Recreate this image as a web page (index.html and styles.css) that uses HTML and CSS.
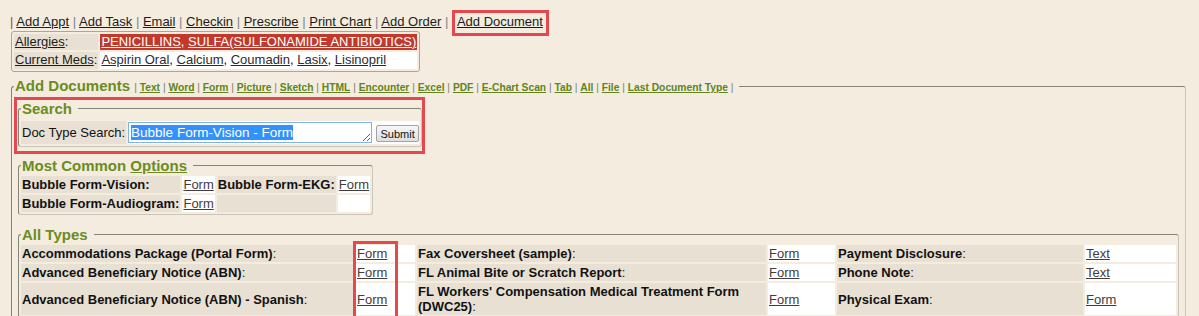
FILE: index.html
```html
<!DOCTYPE html>
<html lang="en">
<head>
  <meta charset="UTF-8">
  <title>Add Document</title>
  <link rel="stylesheet" href="styles.css">
</head>
<body>
  <div class="nav">
    <span class="sep first">|</span> <a href="#">Add Appt</a>
    <span class="sep">|</span> <a href="#">Add Task</a>
    <span class="sep">|</span> <a href="#">Email</a>
    <span class="sep">|</span> <a href="#">Checkin</a>
    <span class="sep">|</span> <a href="#">Prescribe</a>
    <span class="sep">|</span> <a href="#">Print Chart</a>
    <span class="sep">|</span> <a href="#">Add Order</a>
    <span class="sep">|</span> <span class="mark"><a href="#">Add Document</a></span>
  </div>

  <div class="alerts">
    <table>
      <tr>
        <td class="lbl"><a href="#">Allergies</a>:</td>
        <td class="allergy"><a href="#">PENICILLINS</a>, <a href="#">SULFA(SULFONAMIDE ANTIBIOTICS)</a></td>
      </tr>
      <tr>
        <td class="lbl"><a href="#">Current Meds</a>:</td>
        <td class="meds"><a href="#">Aspirin Oral</a>, <a href="#">Calcium</a>, <a href="#">Coumadin</a>, <a href="#">Lasix</a>, <a href="#">Lisinopril</a></td>
      </tr>
    </table>
  </div>

  <fieldset class="docs">
    <legend>Add Documents <span class="types">| <a href="#">Text</a> | <a href="#">Word</a> | <a href="#">Form</a> | <a href="#">Picture</a> | <a href="#">Sketch</a> | <a href="#">HTML</a> | <a href="#">Encounter</a> | <a href="#">Excel</a> | <a href="#">PDF</a> | <a href="#">E-Chart Scan</a> | <a href="#">Tab</a> | <a href="#">All</a> | <a href="#">File</a> | <a href="#">Last Document Type</a> |</span></legend>

    <div class="mark search-mark">
      <fieldset class="group search">
        <legend>Search</legend>
        <table class="grid">
          <tr>
            <td class="lbl">Doc Type Search:</td>
            <td class="val">
              <div class="search-row">
                <div class="doc-input"><span class="sel">Bubble Form-Vision - Form</span></div>
                <button class="submit">Submit</button>
              </div>
            </td>
          </tr>
        </table>
      </fieldset>
    </div>

    <fieldset class="group common">
      <legend>Most Common <a href="#">Options</a></legend>
      <table class="grid">
        <tr>
          <td class="lbl">Bubble Form-Vision:</td>
          <td class="val"><a href="#">Form</a></td>
          <td class="lbl">Bubble Form-EKG:</td>
          <td class="val"><a href="#">Form</a></td>
        </tr>
        <tr>
          <td class="lbl">Bubble Form-Audiogram:</td>
          <td class="val"><a href="#">Form</a></td>
          <td class="lbl"></td>
          <td class="val"></td>
        </tr>
      </table>
    </fieldset>

    <fieldset class="group all">
      <legend>All Types</legend>
      <table class="grid">
        <colgroup>
          <col class="c-lbl1"><col class="c-val1"><col class="c-lbl2"><col class="c-val2"><col class="c-lbl3"><col class="c-val3">
        </colgroup>
        <tr>
          <td class="lbl">Accommodations Package (Portal Form)<span class="colon">:</span></td>
          <td class="val marked"><a href="#">Form</a><span class="col-mark"></span></td>
          <td class="lbl">Fax Coversheet (sample)<span class="colon">:</span></td>
          <td class="val"><a href="#">Form</a></td>
          <td class="lbl">Payment Disclosure<span class="colon">:</span></td>
          <td class="val"><a href="#">Text</a></td>
        </tr>
        <tr>
          <td class="lbl">Advanced Beneficiary Notice (ABN)<span class="colon">:</span></td>
          <td class="val"><a href="#">Form</a></td>
          <td class="lbl">FL Animal Bite or Scratch Report<span class="colon">:</span></td>
          <td class="val"><a href="#">Form</a></td>
          <td class="lbl">Phone Note<span class="colon">:</span></td>
          <td class="val"><a href="#">Text</a></td>
        </tr>
        <tr>
          <td class="lbl">Advanced Beneficiary Notice (ABN) - Spanish<span class="colon">:</span></td>
          <td class="val"><a href="#">Form</a></td>
          <td class="lbl">FL Workers' Compensation Medical Treatment Form (DWC25)<span class="colon">:</span></td>
          <td class="val"><a href="#">Form</a></td>
          <td class="lbl">Physical Exam<span class="colon">:</span></td>
          <td class="val"><a href="#">Form</a></td>
        </tr>
      </table>
    </fieldset>
  </fieldset>
</body>
</html>
```

FILE: styles.css
```css
body {
  margin: 8px;
  background: #f4eddf;
  font-family: "Liberation Sans", Arial, sans-serif;
  font-size: 13px;
  color: #111;
}
a {
  color: #1c1c1c;
}
.nav {
  padding: 5px 0 0 2px;
  line-height: 17px;
  white-space: nowrap;
}
.sep {
  color: #7b8593;
}
.sep.first {
  color: #b03a2e;
}
.mark {
  border: 3px solid #e5484d;
}
.nav .mark {
  padding: 1px 3px 4px 2px;
}

.alerts {
  width: fit-content;
  margin: 1px 0 0 3px;
  border: 1px solid #aaa69c;
  border-radius: 3px;
}
.alerts table {
  border-spacing: 2px;
}
.alerts td {
  padding: 0 1px;
  line-height: 16px;
}
.alerts tr + tr td {
  padding-bottom: 1px;
}
.alerts .lbl {
  background: #e8e1d3;
}
.allergy {
  background: #c0392b;
  color: #fff;
}
.allergy a {
  color: #fff;
}
.meds {
  background: #fff;
}
.meds a {
  color: #2b2b33;
}

fieldset {
  margin: 0;
  padding: 0;
  min-width: 0;
  border: 1px solid;
  border-color: #85827a #c9c5bb #c9c5bb #85827a;
  border-radius: 3px;
}
legend {
  color: #6a8c22;
  font-weight: bold;
  font-size: 15px;
  line-height: 17px;
  padding: 0 6px 0 1px;
}
legend a {
  color: inherit;
}
.docs {
  margin: 5px 5px 0 3px;
  padding: 1px 0 0 2px;
}
.types {
  font-size: 10.25px;
  font-weight: normal;
  color: #7a7a7a;
}
.types a {
  color: #5f8420;
  font-weight: bold;
}

.search-mark {
  width: fit-content;
  padding: 0 0 4px 1px;
}
.group legend {
  margin-left: 2px;
}
.search {
  width: fit-content;
  padding-top: 2px;
}
.common {
  width: fit-content;
  margin: 3px 0 0 4px;
}
.all {
  margin: 11px 6px 0 4px;
}

.grid {
  border-spacing: 2px;
}
.grid td {
  padding: 1px;
  line-height: 15px;
}
.grid .lbl {
  background: #e8e1d3;
  font-weight: bold;
}
.grid .val {
  background: #fff;
}
.grid .val a {
  color: #443c3c;
}
.grid .colon {
  font-weight: normal;
}
.search .grid .lbl {
  font-weight: normal;
}
.search .grid .val {
  padding: 1px 0;
}
.search-row {
  display: flex;
  align-items: flex-end;
  gap: 4px;
}
.doc-input {
  box-sizing: border-box;
  width: 244px;
  height: 21px;
  padding: 0 2px;
  border: 1px solid #7eb4ea;
  background: #fff;
  font-size: 13.5px;
  line-height: 19px;
  resize: both;
  overflow: hidden;
  white-space: nowrap;
}
.sel {
  background: #3390ff;
  color: #fff;
}
.submit {
  box-sizing: border-box;
  width: 43px;
  height: 17px;
  margin-bottom: 1px;
  padding: 0;
  border: 1px solid #a3a3a3;
  border-radius: 2px;
  background: linear-gradient(#f7f7f7, #dedede);
  font-family: "Liberation Sans", Arial, sans-serif;
  font-size: 11px;
  color: #111;
}

.all .grid {
  width: 100%;
  table-layout: fixed;
}
.c-lbl1 { width: 333px; }
.c-val1 { width: 59px; }
.c-lbl2 { width: 349px; }
.c-val2 { width: 67px; }
.c-lbl3 { width: 246px; }
.c-val3 { width: 91px; }
.marked {
  position: relative;
}
.col-mark {
  position: absolute;
  left: -3px;
  top: -4px;
  width: 45px;
  height: 80px;
  box-sizing: border-box;
  border: 3px solid #e5484d;
}
```
